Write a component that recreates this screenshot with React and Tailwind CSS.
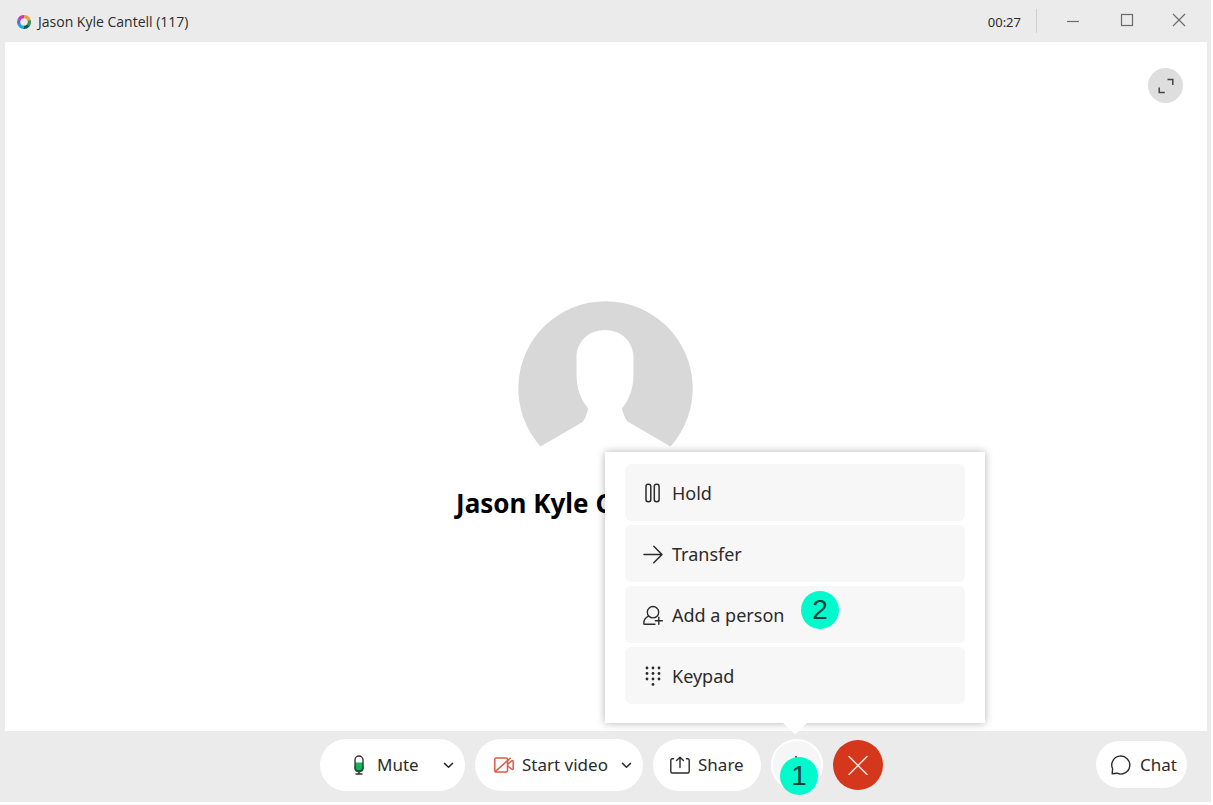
import React from 'react';

const LogoIcon = () => (
    <svg className="h-4 w-4" viewBox="0 0 16 16" fill="none" strokeWidth="3.200" xmlns="http://www.w3.org/2000/svg">
        <path d="M8 2.600A5.400 5.400 0 0 0 3 6" stroke="#b83fc4" />
        <path d="M8 2.600A5.400 5.400 0 0 1 13.200 6.600" stroke="#efa03a" />
        <path d="M13.200 6.400A5.400 5.400 0 0 1 12 11.600" stroke="#3f8f5a" />
        <path d="M12.200 11.400A5.400 5.400 0 0 1 7.400 13.400" stroke="#10585a" />
        <path d="M7.600 13.400A5.400 5.400 0 0 1 3 10" stroke="#18a9d8" />
        <path d="M3.100 10.200A5.400 5.400 0 0 1 3.100 5.800" stroke="#6a63cf" />
    </svg>
);

const AvatarIcon = () => (
    <svg className="h-[146px] w-44 fill-[#d8d8d8]" viewBox="0 0 176 146" xmlns="http://www.w3.org/2000/svg">
        <path d="M22.500 145.500A87.200 87.200 0 1 1 152.500 145.500L109.500 120.500Q106.500 117 103.800 107.500C111 99 115.500 88 115.500 73V57C115.500 40 103 29 87 29S58.500 40 58.500 57V73C58.500 88 63 99 70.300 107.500Q68 117 64.500 121Z" />
    </svg>
);

const HoldIcon = () => (
    <svg className="h-5 w-5" viewBox="0 0 20 20" fill="none" stroke="currentColor" strokeWidth="1.500" xmlns="http://www.w3.org/2000/svg">
        <rect x="3" y="1.200" width="4.800" height="17.600" rx="2.200" />
        <rect x="11.300" y="1.200" width="4.800" height="17.600" rx="2.200" />
    </svg>
);

const TransferIcon = () => (
    <svg className="h-5 w-5" viewBox="0 0 20 20" fill="none" stroke="currentColor" strokeWidth="1.500" strokeLinecap="round" strokeLinejoin="round" xmlns="http://www.w3.org/2000/svg">
        <path d="M1 10.500H19M10.800 2.200L19 10.500L10.800 18.800" />
    </svg>
);

const AddPersonIcon = () => (
    <svg className="h-5 w-5" viewBox="0 0 20 20" fill="none" stroke="currentColor" strokeWidth="1.400" strokeLinecap="round" strokeLinejoin="round" xmlns="http://www.w3.org/2000/svg">
        <circle cx="10" cy="7.200" r="5.700" />
        <path d="M5.800 11.200C2.500 12.500 .8 14.700 .8 18.400Q.8 19.200 1.800 19.200H12" />
        <path d="M15.800 12.200V19.200M12.300 15.700H19.300" />
    </svg>
);

const KeypadIcon = () => (
    <svg className="h-5 w-5 fill-current" viewBox="0 0 20 20" xmlns="http://www.w3.org/2000/svg">
        {[2, 7.500, 13].map((y) =>
            [4, 10, 16].map((x) => <circle key={`${x}-${y}`} cx={x} cy={y} r="1.400" />)
        )}
        <circle cx="10" cy="18.400" r="1.400" />
    </svg>
);

const MicIcon = () => (
    <svg className="h-5 w-3" viewBox="0 0 12 20" fill="none" xmlns="http://www.w3.org/2000/svg">
        <path d="M2 7.500H10V12A4 4 0 0 1 2 12Z" fill="#13b35b" />
        <rect x="2" y="1" width="8" height="15" rx="4" stroke="#333" strokeWidth="1.400" />
        <path d="M2 11.500V12.500C2 15 3.800 16.600 6 16.600S10 15 10 12.500V11.500" stroke="#145c36" strokeWidth="1.600" />
        <path d="M6 16.500V19M2.500 19H9.500" stroke="#333" strokeWidth="1.400" />
    </svg>
);

const VideoOffIcon = () => (
    <svg className="h-4 w-5" viewBox="0 0 20 16" fill="none" stroke="#dc5a44" strokeWidth="1.500" strokeLinecap="round" strokeLinejoin="round" xmlns="http://www.w3.org/2000/svg">
        <rect x=".8" y="1" width="12.700" height="14" rx="1.500" />
        <path d="M1.200 14.600L16.200 1.200" />
        <path d="M14 7L17.700 3.800Q19.200 3 19.200 4.500V11.500Q19.200 13 17.700 12.200L14 9" />
    </svg>
);

const ShareIcon = () => (
    <svg className="h-5 w-5" viewBox="0 0 20 20" fill="none" stroke="currentColor" strokeWidth="1.400" strokeLinecap="round" strokeLinejoin="round" xmlns="http://www.w3.org/2000/svg">
        <path d="M3.500 3.800H2.300Q.8 3.800 .8 5.300V16.500Q.8 18 2.300 18H17.700Q19.200 18 19.200 16.500V5.300Q19.200 3.800 17.700 3.800H16.500" />
        <path d="M10 12.500V2.200M6.500 5.600L10 2.200L13.500 5.600" />
    </svg>
);

const ChevronIcon = () => (
    <svg className="h-3 w-3" viewBox="0 0 12 12" fill="none" stroke="currentColor" strokeWidth="1.500" strokeLinecap="round" strokeLinejoin="round" xmlns="http://www.w3.org/2000/svg">
        <path d="M1.500 4.400L5.500 8.200L9.500 4.400" />
    </svg>
);

const ChatIcon = () => (
    <svg className="h-5 w-5" viewBox="0 0 20 20" fill="none" stroke="currentColor" strokeWidth="1.400" strokeLinejoin="round" xmlns="http://www.w3.org/2000/svg">
        <path d="M1.200 18.800L1.600 13.800A9 9 0 1 1 6 18.200Z" />
    </svg>
);

const MENU_ITEMS = [
    { id: 'hold', label: 'Hold', Icon: HoldIcon },
    { id: 'transfer', label: 'Transfer', Icon: TransferIcon },
    { id: 'add-person', label: 'Add a person', Icon: AddPersonIcon, step: 2 },
    { id: 'keypad', label: 'Keypad', Icon: KeypadIcon },
];

function StepBadge({ step, className }) {
    return (
        <span className={`absolute flex h-[38px] w-[38px] items-center justify-center rounded-full bg-[#00facc] font-['Liberation_Sans',sans-serif] text-[28px] leading-none text-[#10403c] ${className}`}>
            {step}
        </span>
    );
}

function TitleBar() {
    return (
        <header className="flex h-[42px] items-center justify-between pr-4 pl-4">
            <div className="flex items-center gap-[6px] pt-[2px] font-['Open_Sans',sans-serif]">
                <LogoIcon />
                <h1 className="text-sm text-[#2b2b2b]">Jason Kyle Cantell (117)</h1>
            </div>
            <div className="flex items-center text-[#6b6b6b]">
                <time className="pt-[3px] text-[13px] text-[#2b2b2b]">00:27</time>
                <span className="mr-5 ml-[15px] h-6 w-px bg-[#d0d0d0]" />
                <button type="button" aria-label="Minimize" className="flex h-8 w-8 items-center justify-center">
                    <svg className="h-4 w-4" viewBox="0 0 16 16" fill="none" stroke="currentColor" strokeWidth="1.200">
                        <path d="M2 8.500H14" />
                    </svg>
                </button>
                <button type="button" aria-label="Maximize" className="ml-[22px] flex h-8 w-8 items-center justify-center">
                    <svg className="h-4 w-4" viewBox="0 0 16 16" fill="none" stroke="currentColor" strokeWidth="1.200">
                        <rect x="2.500" y="1.500" width="11" height="11" />
                    </svg>
                </button>
                <button type="button" aria-label="Close" className="ml-5 flex h-8 w-8 items-center justify-center">
                    <svg className="h-4 w-4" viewBox="0 0 16 16" fill="none" stroke="currentColor" strokeWidth="1.200">
                        <path d="M2 1L14 13M14 1L2 13" />
                    </svg>
                </button>
            </div>
        </header>
    );
}

function MoreMenu() {
    return (
        <div role="menu" className="absolute bottom-full left-1/2 z-10 mb-4 -ml-48 flex w-[380px] flex-col gap-1 bg-white px-5 pt-3 pb-[19px] shadow-[0_0_8px_rgba(0,0,0,0.3)]">
            {MENU_ITEMS.map(({ id, label, Icon, step }) => (
                <button key={id} type="button" role="menuitem" className="relative flex h-[57px] items-center gap-[9px] rounded-md bg-[#f7f7f7] pl-[18px] text-lg text-[#2b2b2b]">
                    <Icon />
                    {label}
                    {step && <StepBadge step={step} className="top-[5px] left-44" />}
                </button>
            ))}
            <svg className="absolute top-full left-1/2 -ml-3 h-[11px] w-6 fill-white" viewBox="0 0 24 11" xmlns="http://www.w3.org/2000/svg">
                <path d="M0 0H24L13 10.500Q12 11 11 10.500Z" />
            </svg>
        </div>
    );
}

function CallControls() {
    return (
        <footer className="grid h-[71px] grid-cols-[1fr_auto_1fr] items-start pt-2 pr-6 pl-4 text-[17px] text-[#2b2b2b]">
            <div />
            <div className="flex items-center gap-[10px]">
                <div className="flex h-[52px] w-[145px] items-center justify-between rounded-full bg-white pr-[10px] pl-[33px]">
                    <button type="button" className="flex items-center gap-3">
                        <MicIcon />
                        Mute
                    </button>
                    <button type="button" aria-label="Audio options"><ChevronIcon /></button>
                </div>
                <div className="flex h-[52px] w-[168px] items-center justify-between rounded-full bg-white pr-[10px] pl-[19px]">
                    <button type="button" className="flex items-center gap-2">
                        <VideoOffIcon />
                        Start video
                    </button>
                    <button type="button" aria-label="Video options"><ChevronIcon /></button>
                </div>
                <button type="button" className="flex h-[52px] w-[108px] items-center gap-2 rounded-full bg-white pl-[17px]">
                    <ShareIcon />
                    Share
                </button>
                <div className="relative">
                    <button type="button" aria-label="More options" aria-expanded="true" className="flex h-[52px] w-[52px] items-center justify-center rounded-full border-2 border-white bg-[#f6f6f6]">
                        <svg className="h-5 w-5 fill-current" viewBox="0 0 20 20">
                            <circle cx="9" cy="2" r="1" />
                            <circle cx="9" cy="10" r="1" />
                            <circle cx="9" cy="18" r="1" />
                        </svg>
                    </button>
                    <StepBadge step={1} className="top-[18px] left-[9px]" />
                    <MoreMenu />
                </div>
                <button type="button" aria-label="End call" className="flex h-[50px] w-[50px] items-center justify-center rounded-full bg-[#d4371c]">
                    <svg className="h-5 w-5" viewBox="0 0 20 20" fill="none" stroke="#fbe3de" strokeWidth="1.500" strokeLinecap="round">
                        <path d="M1 1.500L19 19.500M19 1.500L1 19.500" />
                    </svg>
                </button>
            </div>
            <button type="button" className="mt-[2px] flex h-[47px] w-[91px] items-center gap-[9px] justify-self-end rounded-full bg-white pl-[15px]">
                <ChatIcon />
                Chat
            </button>
        </footer>
    );
}

function App() {
    return (
        <div className="min-h-screen bg-white pr-[2px] pb-[3px] font-['Noto_Sans','Open_Sans',sans-serif]">
            <div className="flex min-h-[calc(100vh-3px)] flex-col bg-[#ebebeb]">
                <TitleBar />
                <main className="relative mr-1 ml-[5px] flex flex-1 flex-col items-center justify-center bg-white pt-12">
                    <button type="button" aria-label="Enter full screen" className="absolute top-[26px] right-6 flex h-[35px] w-[35px] items-center justify-center rounded-full bg-[#dedede] text-[#444]">
                        <svg className="h-4 w-4" viewBox="0 0 16 16" fill="none" stroke="currentColor" strokeWidth="1.500">
                            <path d="M9.500 1.500H14.800V7M1.200 9.500V14.500H6.800" />
                        </svg>
                    </button>
                    <AvatarIcon />
                    <h2 className="mt-[38px] text-[26px] leading-9 font-bold text-black">Jason Kyle Cantell (117)</h2>
                </main>
                <CallControls />
            </div>
        </div>
    );
}

export default App;
